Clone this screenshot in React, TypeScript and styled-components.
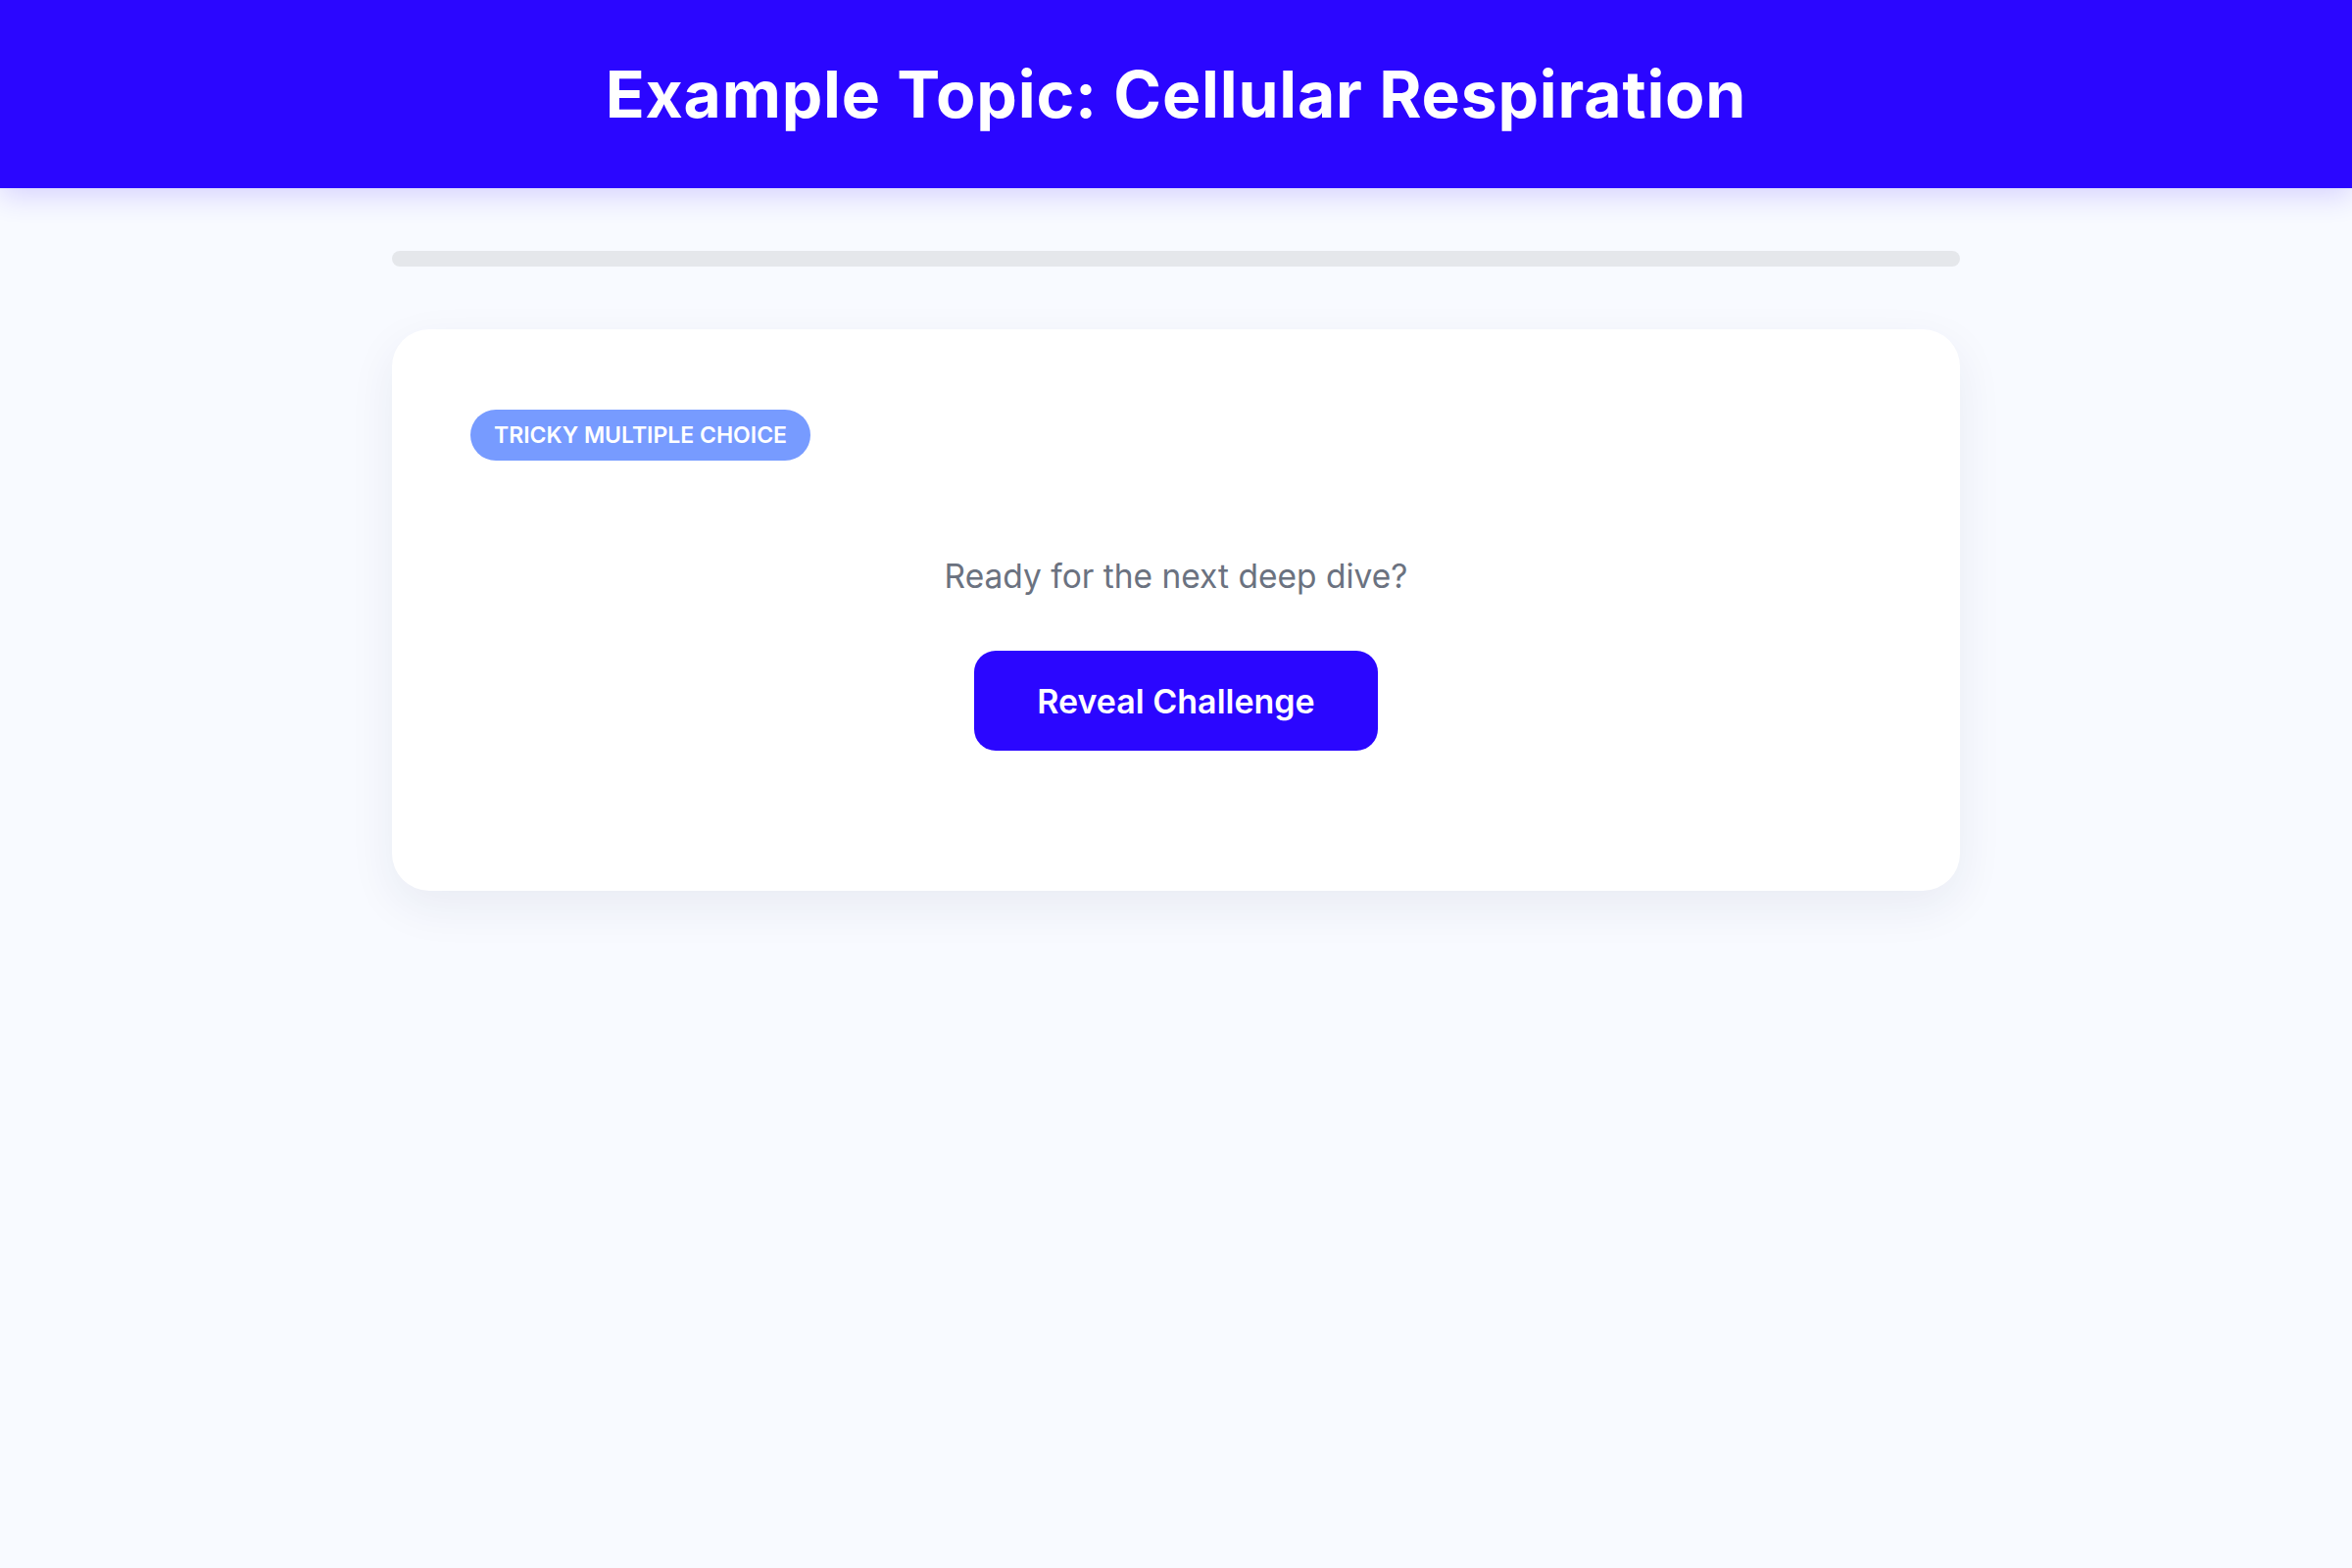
import React from "react";
import styled, { createGlobalStyle } from "styled-components";

const GlobalStyle = createGlobalStyle`
  * { box-sizing: border-box; }
  html, body { margin: 0; padding: 0; }
  body {
    background: #f8faff;
    font-family: "Inter", "Noto Sans", "Liberation Sans", sans-serif;
    min-height: 1600px;
  }
`;

const Page = styled.div`
  min-height: 1600px;
  background: #f8faff;
`;

const Header = styled.header`
  height: 192px;
  background: #2b06ff;
  display: flex;
  align-items: center;
  justify-content: center;
  box-shadow: 0 8px 28px rgba(43, 6, 255, 0.16);
`;

const Title = styled.h1`
  margin: 0;
  color: #ffffff;
  font-size: 66px;
  font-weight: 700;
  letter-spacing: 0.8px;
  line-height: 1;
`;

const Main = styled.main`
  width: 1600px;
  margin: 0 auto;
  padding-top: 64px;
  display: flex;
  flex-direction: column;
  gap: 64px;
`;

const Progress = styled.div`
  height: 16px;
  border-radius: 8px;
  background: #e5e7eb;
  overflow: hidden;
`;

const ProgressFill = styled.div`
  height: 100%;
  background: #2b06ff;
  border-radius: 8px;
`;

const Card = styled.section`
  background: #ffffff;
  border-radius: 38px;
  height: 573px;
  padding: 82px 80px 0;
  box-shadow: 0 16px 48px rgba(30, 40, 90, 0.07);
  display: flex;
  flex-direction: column;
  align-items: flex-start;
`;

const Badge = styled.span`
  display: inline-flex;
  align-items: center;
  height: 52px;
  padding: 0 24px;
  border-radius: 26px;
  background: #779bff;
  color: #ffffff;
  font-size: 23px;
  font-weight: 600;
  text-transform: uppercase;
`;

const Body = styled.div`
  align-self: stretch;
  display: flex;
  flex-direction: column;
  align-items: center;
  padding-top: 94px;
`;

const Prompt = styled.p`
  margin: 0;
  color: #6b7280;
  font-size: 33.5px;
  font-weight: 400;
  line-height: 48px;
`;

const RevealButton = styled.button`
  margin-top: 52px;
  height: 102px;
  width: 412px;
  border: none;
  border-radius: 22px;
  background: #2b06ff;
  color: #ffffff;
  font-family: inherit;
  font-size: 34px;
  font-weight: 600;
  cursor: pointer;
`;

export default function App() {
  const progress = 0;
  return (
    <>
      <GlobalStyle />
      <Page>
        <Header>
          <Title>Example Topic: Cellular Respiration</Title>
        </Header>
        <Main>
          <Progress>
            <ProgressFill style={{ width: `${progress}%` }} />
          </Progress>
          <Card>
            <Badge>Tricky Multiple Choice</Badge>
            <Body>
              <Prompt>Ready for the next deep dive?</Prompt>
              <RevealButton>Reveal Challenge</RevealButton>
            </Body>
          </Card>
        </Main>
      </Page>
    </>
  );
}
